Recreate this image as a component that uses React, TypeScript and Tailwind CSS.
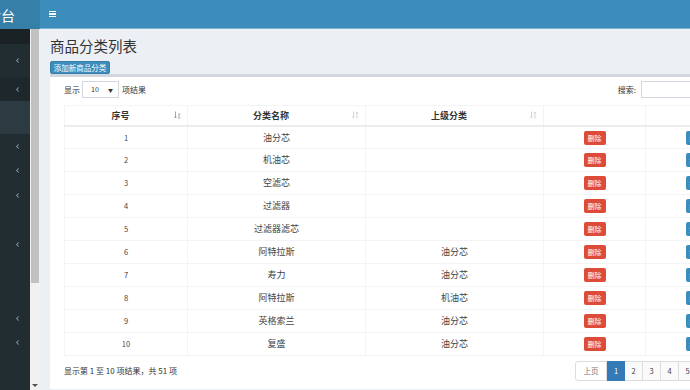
import React from 'react';
import { ChevronLeft } from 'lucide-react';

const rows = [
  { id: 1, name: '油分芯', parent: '' },
  { id: 2, name: '机油芯', parent: '' },
  { id: 3, name: '空滤芯', parent: '' },
  { id: 4, name: '过滤器', parent: '' },
  { id: 5, name: '过滤器滤芯', parent: '' },
  { id: 6, name: '阿特拉斯', parent: '油分芯' },
  { id: 7, name: '寿力', parent: '油分芯' },
  { id: 8, name: '阿特拉斯', parent: '机油芯' },
  { id: 9, name: '英格索兰', parent: '油分芯' },
  { id: 10, name: '复盛', parent: '油分芯' },
];

// sidebar blocks: height, background, has chevron
const sideItems: { h: string; bg: string; chev: boolean }[] = [
  { h: 'h-[15px]', bg: 'bg-[#1a2226]', chev: false },
  { h: 'h-[33px]', bg: 'bg-[#222d32]', chev: true },
  { h: 'h-[24px]', bg: 'bg-[#1e282c]', chev: true },
  { h: 'h-[33px]', bg: 'bg-[#2c3b41]', chev: false },
  { h: 'h-[24px]', bg: 'bg-[#222d32]', chev: true },
  { h: 'h-[25px]', bg: 'bg-[#222d32]', chev: true },
  { h: 'h-[24px]', bg: 'bg-[#222d32]', chev: true },
  { h: 'h-[25px]', bg: 'bg-[#222d32]', chev: false },
  { h: 'h-[25px]', bg: 'bg-[#222d32]', chev: true },
  { h: 'h-[49px]', bg: 'bg-[#222d32]', chev: false },
  { h: 'h-[24px]', bg: 'bg-[#222d32]', chev: true },
  { h: 'h-[25px]', bg: 'bg-[#222d32]', chev: true },
];

const SortIcon: React.FC<{ active?: boolean }> = ({ active }) => (
  <svg width="7" height="8" viewBox="0 0 7 8" className="shrink-0">
    <path d="M1.5 0.5 V7 M0.3 5.6 L1.5 7 L2.7 5.6" stroke={active ? '#9a9a9a' : '#d0d0d0'} strokeWidth="0.9" fill="none" />
    {active ? (
      <path d="M4 3 H6.5 M4 5 H6 M4 7 H6.5" stroke="#9a9a9a" strokeWidth="0.9" fill="none" />
    ) : (
      <path d="M5 7.5 V1 M3.8 2.4 L5 1 L6.2 2.4" stroke="#d0d0d0" strokeWidth="0.9" fill="none" />
    )}
  </svg>
);

const App: React.FC = () => {
  return (
    <div className="w-[690px] h-[390px] overflow-hidden flex flex-col bg-[#ecf0f5] font-['Noto_Sans_CJK_SC','Noto_Sans',sans-serif] text-[#333]">
      {/* header */}
      <div className="flex h-[29px] shrink-0">
        <div className="w-[40px] bg-[#367fa9] flex justify-end items-center pr-[25px] overflow-hidden whitespace-nowrap text-white text-[14px] leading-none">
          管理后台
        </div>
        <div className="flex-1 bg-[#3c8dbc] border-b border-[#7fb3d5] flex items-center pl-[9px]">
          <div className="flex flex-col gap-[1px]">
            <div className="w-[7px] h-[1.5px] bg-white" />
            <div className="w-[7px] h-[1.5px] bg-white" />
            <div className="w-[7px] h-[1.5px] bg-white" />
          </div>
        </div>
      </div>

      <div className="flex flex-1 min-h-0">
        {/* sidebar */}
        <div className="w-[30px] bg-[#222d32] flex flex-col">
          {sideItems.map((s, i) => (
            <div key={i} className={`${s.h} ${s.bg} flex items-center pl-[14px] shrink-0`}>
              {s.chev && <ChevronLeft size={7} strokeWidth={3.5} color="#8aa4af" />}
            </div>
          ))}
        </div>
        {/* scrollbar */}
        <div className="w-[10px] bg-[#f1f1f1] flex flex-col items-center">
          <div className="w-[8px] h-[254px] bg-[#c1c1c1]" />
          <div className="flex-1" />
          <div className="w-0 h-0 border-l-[3px] border-r-[3px] border-t-[3px] border-l-transparent border-r-transparent border-t-[#505050] mb-[3px]" />
        </div>

        {/* content */}
        <div className="flex-1 min-w-0 overflow-hidden pl-[10px]">
          <div className="mt-[8px] text-[14.5px] leading-[18px] text-[#333] whitespace-nowrap">商品分类列表</div>
          <div className="mt-[6px] w-[60px] h-[13px] bg-[#3c8dbc] border border-[#367fa9] rounded-[2px] text-white text-[7.5px] leading-[11px] text-center whitespace-nowrap">
            添加新商品分类
          </div>

          <div className="w-[720px] bg-white border-t-[3px] border-[#d2d6de] pl-[14px] pt-[4px] pb-[8px] text-[8px]">
            <div className="w-[683px] flex items-center h-[17px]">
              <span>显示</span>
              <div className="ml-[2px] w-[37px] h-[17px] border border-[#d2d6de] flex items-center justify-between pl-[8px] pr-[5px] text-[7px]">
                <span>10</span>
                <span className="text-[5px]">▼</span>
              </div>
              <span className="ml-[3px]">项结果</span>
              <div className="flex-1" />
              <span>搜索:</span>
              <div className="ml-[5px] w-[106px] h-[17px] border border-[#d2d6de]" />
            </div>

            <table className="mt-[7px] w-[683px] table-fixed border-collapse">
              <colgroup>
                <col className="w-[123px]" />
                <col className="w-[178px]" />
                <col className="w-[178px]" />
                <col className="w-[102px]" />
                <col className="w-[102px]" />
              </colgroup>
              <thead>
                <tr className="h-[20px]">
                  {[
                    { t: '序号', s: 'active' },
                    { t: '分类名称', s: 'on' },
                    { t: '上级分类', s: 'on' },
                    { t: '', s: '' },
                    { t: '', s: '' },
                  ].map((h, i) => (
                    <th key={i} className="p-0 border border-[#f4f4f4] border-b-2 border-b-[#ececec] font-bold text-[9px]">
                      <div className="flex items-center pr-[6px] pl-[2px]">
                        <span className="flex-1 text-center">{h.t}</span>
                        {h.s && <SortIcon active={h.s === 'active'} />}
                      </div>
                    </th>
                  ))}
                </tr>
              </thead>
              <tbody>
                {rows.map((r) => (
                  <tr key={r.id} className="h-[23px] text-center text-[9px] text-[#444]">
                    <td className="p-0 border border-[#f4f4f4] text-[7.5px]">{r.id}</td>
                    <td className="p-0 border border-[#f4f4f4]">{r.name}</td>
                    <td className="p-0 border border-[#f4f4f4]">{r.parent}</td>
                    <td className="p-0 border border-[#f4f4f4]">
                      <span className="inline-block w-[22px] h-[14px] leading-[14px] bg-[#dd4b39] rounded-[2px] text-white text-[7px] align-middle">
                        删除
                      </span>
                    </td>
                    <td className="p-0 border border-[#f4f4f4]">
                      <span className="inline-block w-[22px] h-[14px] leading-[14px] bg-[#3c8dbc] rounded-[2px] text-white text-[7px] align-middle">
                        编辑
                      </span>
                    </td>
                  </tr>
                ))}
              </tbody>
            </table>

            <div className="w-[683px] mt-[5px] flex items-center h-[20px]">
              <span className="flex-1 whitespace-nowrap">显示第 1 至 10 项结果，共 51 项</span>
              <div className="flex h-[20px] text-[7.5px]">
                <div className="w-[32px] border border-[#ddd] rounded-l-[3px] flex items-center justify-center text-[#777]">上页</div>
                <div className="w-[18px] bg-[#337ab7] border border-[#337ab7] text-white flex items-center justify-center">1</div>
                {[2, 3, 4, 5, 6].map((n) => (
                  <div key={n} className="w-[18px] border border-l-0 border-[#ddd] bg-[#fafafa] flex items-center justify-center text-[#444]">
                    {n}
                  </div>
                ))}
                <div className="w-[32px] border border-l-0 border-[#ddd] rounded-r-[3px] bg-[#fafafa] flex items-center justify-center text-[#444]">下页</div>
              </div>
            </div>
          </div>
        </div>
      </div>
    </div>
  );
};

export default App;
